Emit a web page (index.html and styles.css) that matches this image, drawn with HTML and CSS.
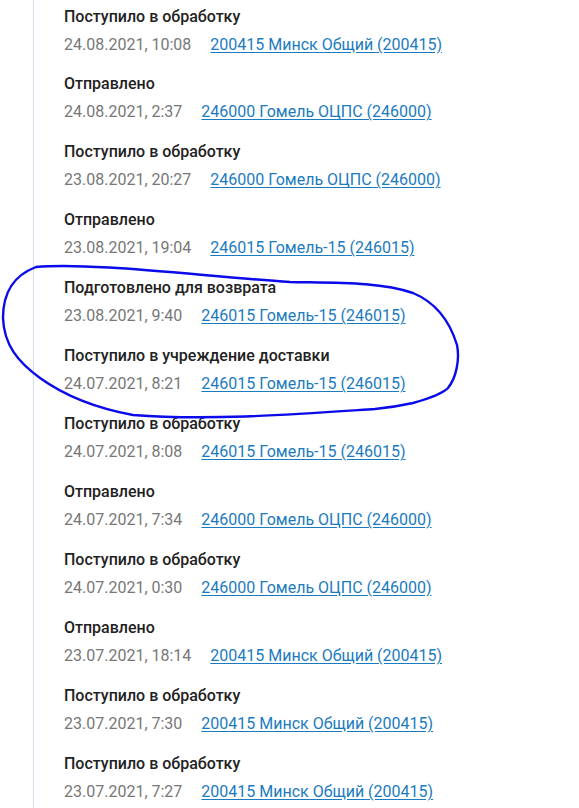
FILE: index.html
```html
<!DOCTYPE html>
<html lang="ru">
<head>
<meta charset="utf-8">
<link rel="stylesheet" href="styles.css">
</head>
<body>
<div class="page">
  <ul class="timeline">
    <li class="event"><div class="title">Поступило в обработку</div><div class="meta"><span class="date">24.08.2021, 10:08</span><a href="#" class="place">200415 Минск Общий (200415)</a></div></li>
    <li class="event"><div class="title">Отправлено</div><div class="meta"><span class="date">24.08.2021, 2:37</span><a href="#" class="place">246000 Гомель ОЦПС (246000)</a></div></li>
    <li class="event"><div class="title">Поступило в обработку</div><div class="meta"><span class="date">23.08.2021, 20:27</span><a href="#" class="place">246000 Гомель ОЦПС (246000)</a></div></li>
    <li class="event"><div class="title">Отправлено</div><div class="meta"><span class="date">23.08.2021, 19:04</span><a href="#" class="place">246015 Гомель-15 (246015)</a></div></li>
    <li class="event"><div class="title">Подготовлено для возврата</div><div class="meta"><span class="date">23.08.2021, 9:40</span><a href="#" class="place">246015 Гомель-15 (246015)</a></div></li>
    <li class="event"><div class="title">Поступило в учреждение доставки</div><div class="meta"><span class="date">24.07.2021, 8:21</span><a href="#" class="place">246015 Гомель-15 (246015)</a></div></li>
    <li class="event"><div class="title">Поступило в обработку</div><div class="meta"><span class="date">24.07.2021, 8:08</span><a href="#" class="place">246015 Гомель-15 (246015)</a></div></li>
    <li class="event"><div class="title">Отправлено</div><div class="meta"><span class="date">24.07.2021, 7:34</span><a href="#" class="place">246000 Гомель ОЦПС (246000)</a></div></li>
    <li class="event"><div class="title">Поступило в обработку</div><div class="meta"><span class="date">24.07.2021, 0:30</span><a href="#" class="place">246000 Гомель ОЦПС (246000)</a></div></li>
    <li class="event"><div class="title">Отправлено</div><div class="meta"><span class="date">23.07.2021, 18:14</span><a href="#" class="place">200415 Минск Общий (200415)</a></div></li>
    <li class="event"><div class="title">Поступило в обработку</div><div class="meta"><span class="date">23.07.2021, 7:30</span><a href="#" class="place">200415 Минск Общий (200415)</a></div></li>
    <li class="event"><div class="title">Поступило в обработку</div><div class="meta"><span class="date">23.07.2021, 7:27</span><a href="#" class="place">200415 Минск Общий (200415)</a></div></li>
  </ul>
  <svg class="scribble" width="579" height="808" viewBox="0 0 579 808" aria-hidden="true">
    <path d="M36 267 C90 262 200 276 290 282 C340 283 380 282 413 293 C437 303 450 322 457 345 C460 360 456 378 448 388 C442 394 430 398 413 403 C395 407 385 408 375 409 C300 414 210 421 133 415 C95 408 65 396 40 378 C18 362 4 345 3 318 C3 295 12 276 36 267 Z" fill="none" stroke="#0a0aea" stroke-width="2.4" stroke-linejoin="round"/>
  </svg>
</div>
</body>
</html>
```

FILE: styles.css
```css
html, body {
  margin: 0;
  padding: 0;
  background: #ffffff;
}

body {
  font-family: Roboto, "Noto Sans", sans-serif;
  overflow: hidden;
}

.page {
  position: relative;
  width: 579px;
  height: 808px;
  overflow: hidden;
}

.timeline {
  list-style: none;
  margin: 0 0 0 33px;
  padding: 6.5px 0 0 30px;
  border-left: 1px solid #d5dfeb;
  height: 100%;
  box-sizing: border-box;
}

.event {
  margin: 0 0 17.95px 0;
}

.title {
  font-size: 16px;
  line-height: 20px;
  font-weight: 500;
  color: #222222;
}

.meta {
  display: flex;
  align-items: baseline;
  gap: 19px;
  margin-top: 6px;
  font-size: 16px;
  line-height: 24px;
}

.date {
  color: #777777;
}

.place {
  color: #1b7bc0;
  text-decoration: underline;
  text-underline-offset: 2px;
}

.scribble {
  position: absolute;
  left: 0;
  top: 0;
  pointer-events: none;
}
```
